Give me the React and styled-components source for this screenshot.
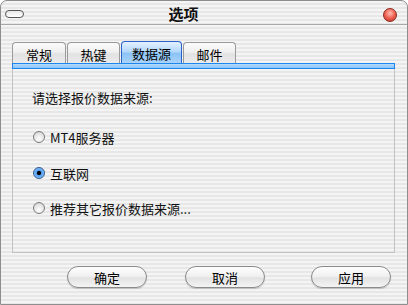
import React from "react";
import styled, { createGlobalStyle } from "styled-components";

const Global = createGlobalStyle`
  html, body { margin: 0; padding: 0; background: #ffffff; }
  body { font-family: "Noto Sans CJK SC", "Noto Sans", sans-serif; }
`;

const stripes = `repeating-linear-gradient(180deg, #f4f4f4 0px, #f4f4f4 2px, #e7e7e7 2px, #e7e7e7 4px)`;

const Window = styled.div`
  width: 408px;
  height: 305px;
  box-sizing: border-box;
  border: 1px solid #8e8e8e;
  border-radius: 7px 7px 0 0;
  background: ${stripes};
  display: flex;
  flex-direction: column;
  overflow: hidden;
`;

const TitleBar = styled.div`
  height: 24px;
  box-sizing: border-box;
  border-bottom: 1px solid #a8a8a8;
  display: flex;
  align-items: center;
  padding: 0 10px 0 4px;
`;

const Pill = styled.div`
  width: 19px;
  height: 8px;
  box-sizing: border-box;
  border: 1px solid #555;
  border-radius: 5px;
  background: linear-gradient(180deg, #e8e8e8, #ffffff);
  margin-top: 2px;
`;

const Title = styled.div`
  flex: 1;
  text-align: center;
  font-size: 15px;
  font-weight: bold;
  color: #111;
  padding-right: 40px;
  line-height: 18px;
  margin-top: 2px;
`;

const CloseBtn = styled.div`
  width: 14px;
  height: 14px;
  border-radius: 50%;
  box-sizing: border-box;
  border: 1px solid #8a2b22;
  background: radial-gradient(circle at 50% 35%, #ffc0b6 0%, #f06a5a 45%, #c4281c 100%);
  margin-top: 4px;
`;

const Body = styled.div`
  padding: 16px 13px 0 11px;
  display: flex;
  flex-direction: column;
`;

const TabRow = styled.div`
  display: flex;
  align-items: flex-end;
  gap: 1px;
  height: 22px;
`;

const Tab = styled.div`
  width: ${p => p.$w}px;
  height: ${p => (p.$active ? 22 : 21)}px;
  box-sizing: border-box;
  border: 1px solid ${p => (p.$active ? "#2d63c8" : "#9a9a9a")};
  border-bottom: none;
  border-radius: 4px 4px 0 0;
  background: ${p =>
    p.$active
      ? "linear-gradient(180deg, #e3f1ff 0%, #b5d8fb 45%, #8cc3f6 55%, #a9d3fb 100%)"
      : "linear-gradient(180deg, #fbfbfb 0%, #f0f0f0 45%, #e2e2e2 55%, #ebebeb 100%)"};
  display: flex;
  align-items: center;
  justify-content: center;
  font-size: 13px;
  color: #000;
  padding-top: 2px;
`;

const Panel = styled.div`
  width: 383px;
  height: 190px;
  box-sizing: border-box;
  border: 1px solid #c2c2c2;
  border-top: none;
  display: flex;
  flex-direction: column;
`;

const BlueBar = styled.div`
  height: 6px;
  flex: none;
  box-sizing: border-box;
  border: 1px solid #1f86ee;
  background: linear-gradient(180deg, #b4dafd, #8ac4f7);
  margin: 0 -1px;
`;

const PanelContent = styled.div`
  padding: 21px 0 0 20px;
  display: flex;
  flex-direction: column;
`;

const Label = styled.div`
  font-size: 13px;
  line-height: 16px;
  color: #111;
  margin-left: -1px;
  margin-bottom: 23px;
`;

const RadioRow = styled.div`
  display: flex;
  align-items: center;
  gap: 5px;
  height: 16px;
  margin-bottom: ${p => p.$mb}px;
  font-size: 13px;
  color: #111;
`;

const Radio = styled.div`
  width: 12px;
  height: 12px;
  border-radius: 50%;
  box-sizing: border-box;
  border: 1px solid ${p => (p.$on ? "#34598f" : "#7b7b7b")};
  background: ${p =>
    p.$on
      ? "radial-gradient(circle at 50% 50%, #000 0 1.8px, #4c9bf0 2.4px, #a9d4fb 100%)"
      : "radial-gradient(circle at 50% 70%, #ffffff 0%, #e4e4e4 60%, #c8c8c8 100%)"};
`;

const ButtonRow = styled.div`
  display: flex;
  padding: 13px 0 0 55px;
`;

const Button = styled.div`
  width: 80px;
  height: 22px;
  box-sizing: border-box;
  margin-left: ${p => p.$ml}px;
  border: 1px solid #8a8a8a;
  border-radius: 11px;
  background: linear-gradient(180deg, #fdfdfd 0%, #f1f1f1 45%, #e2e2e2 55%, #f4f4f4 100%);
  box-shadow: 0 1px 1px rgba(0,0,0,0.18);
  display: flex;
  align-items: center;
  justify-content: center;
  font-size: 13px;
  color: #000;
`;

export default function App() {
  return (
    <>
      <Global />
      <Window>
        <TitleBar>
          <Pill />
          <Title>选项</Title>
          <CloseBtn />
        </TitleBar>
        <Body>
          <TabRow>
            <Tab $w={54}>常规</Tab>
            <Tab $w={53}>热键</Tab>
            <Tab $w={61} $active>数据源</Tab>
            <Tab $w={53}>邮件</Tab>
          </TabRow>
          <Panel>
            <BlueBar />
            <PanelContent>
              <Label>请选择报价数据来源:</Label>
              <RadioRow $mb={20}>
                <Radio />
                <span>MT4服务器</span>
              </RadioRow>
              <RadioRow $mb={19}>
                <Radio $on />
                <span>互联网</span>
              </RadioRow>
              <RadioRow $mb={0}>
                <Radio />
                <span>推荐其它报价数据来源...</span>
              </RadioRow>
            </PanelContent>
          </Panel>
          <ButtonRow>
            <Button $ml={0}>确定</Button>
            <Button $ml={38}>取消</Button>
            <Button $ml={46}>应用</Button>
          </ButtonRow>
        </Body>
      </Window>
    </>
  );
}
